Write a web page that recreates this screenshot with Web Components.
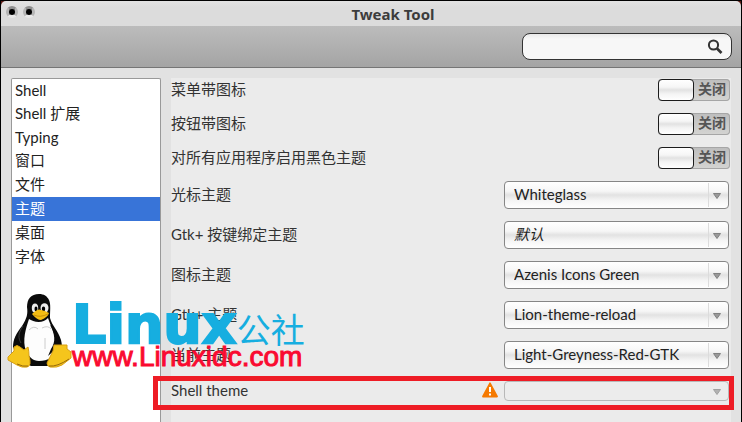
<!DOCTYPE html>
<html lang="zh-CN">
<head>
<meta charset="utf-8">
<title>Tweak Tool</title>
<style>
  html, body { height: 100%; margin: 0; }
  body {
    overflow: hidden;
    background: #000;
    color: #333;
    font: 15px/22px Lato, "Noto Sans CJK SC", sans-serif;
  }
</style>
</head>
<body>
<tweak-window heading="Tweak Tool">
  <tweak-search slot="toolbar"></tweak-search>
  <tweak-sidebar slot="sidebar">
    <tweak-category compact>Shell</tweak-category>
    <tweak-category>Shell 扩展</tweak-category>
    <tweak-category compact>Typing</tweak-category>
    <tweak-category>窗口</tweak-category>
    <tweak-category>文件</tweak-category>
    <tweak-category selected>主题</tweak-category>
    <tweak-category>桌面</tweak-category>
    <tweak-category>字体</tweak-category>
  </tweak-sidebar>
  <tweak-switch label="菜单带图标"></tweak-switch>
  <tweak-switch label="按钮带图标"></tweak-switch>
  <tweak-switch label="对所有应用程序启用黑色主题"></tweak-switch>
  <tweak-select label="光标主题" value="Whiteglass"></tweak-select>
  <tweak-select label="Gtk+ 按键绑定主题" value="默认" unset></tweak-select>
  <tweak-select label="图标主题" value="Azenis Icons Green"></tweak-select>
  <tweak-select label="Gtk+ 主题" value="Lion-theme-reload"></tweak-select>
  <tweak-select label="当前主题" value="Light-Greyness-Red-GTK"></tweak-select>
  <tweak-select label="Shell theme" value="" disabled highlighted></tweak-select>
</tweak-window>
<site-watermark></site-watermark>

<script>
class TweakWindow extends HTMLElement {
  constructor() {
    super();
    this.attachShadow({ mode: 'open' });
  }

  connectedCallback() {
    this.shadowRoot.innerHTML = `
      <style>
        :host {
          display: flex;
          flex-direction: column;
          height: 100%;
          box-sizing: border-box;
          border: 1px solid #000;
          border-bottom: 0;
          background: #5a1a14;
        }
        header {
          display: flex;
          align-items: center;
          gap: 10px;
          height: 25px;
          padding: 0 0 0 5px;
          background: linear-gradient(#e2e2e2, #dcdcdc 6px);
          border-radius: 5px 5px 0 0;
        }
        .buttons { display: flex; gap: 5px; padding-bottom: 3px; }
        .buttons button {
          width: 12px;
          height: 12px;
          padding: 0;
          border: 3px solid;
          border-color: #8e8e8e #b5b5b5 #e8e8e8;
          border-radius: 50%;
          background: #000;
        }
        h1 {
          flex: 1;
          margin: 0;
          padding-top: 1px;
          color: #3c3c3c;
          font: bold 15px/22px "Noto Sans", sans-serif;
          text-align: center;
        }
        .toolbar {
          display: flex;
          justify-content: flex-end;
          padding: 7px 9px;
          background: linear-gradient(#bcbcbc, #a4a4a4);
          border-bottom: 1px solid #757575;
        }
        .body {
          flex: 1;
          min-height: 0;
          display: flex;
          gap: 10px;
          padding: 10px 10px 0;
          background: #e2e2e2;
        }
        main {
          flex: 1;
          display: flex;
          flex-direction: column;
          gap: 12px;
          padding: 1px 1px 0 0;
          background: #ebebeb;
        }
      </style>
      <header>
        <div class="buttons">
          <button aria-label="Close"></button>
          <button aria-label="Minimize"></button>
        </div>
        <h1>${this.getAttribute('heading')}</h1>
      </header>
      <div class="toolbar"><slot name="toolbar"></slot></div>
      <div class="body">
        <slot name="sidebar"></slot>
        <main><slot></slot></main>
      </div>
    `;
  }
}

class TweakSearch extends HTMLElement {
  constructor() {
    super();
    this.attachShadow({ mode: 'open' });
    this.shadowRoot.innerHTML = `
      <style>
        :host { display: block; width: 210px; }
        label {
          display: flex;
          align-items: center;
          box-sizing: border-box;
          height: 27px;
          padding: 0 8px;
          border: 1px solid #333;
          border-radius: 8px;
          background: linear-gradient(#e9e9e9, #f7f7f7 5px);
        }
        input {
          flex: 1;
          min-width: 0;
          border: 0;
          outline: 0;
          background: none;
          font: inherit;
        }
      </style>
      <label>
        <input type="text" aria-label="Search">
        <svg width="16" height="16" viewBox="0 0 16 16" fill="none" stroke="#333">
          <circle cx="6.5" cy="6" r="4.6" stroke-width="2"></circle>
          <path d="M10 9.5L14.5 14" stroke-width="2.6"></path>
        </svg>
      </label>
    `;
  }
}

class TweakSidebar extends HTMLElement {
  constructor() {
    super();
    this.attachShadow({ mode: 'open' });
    this.shadowRoot.innerHTML = `
      <style>
        :host {
          display: block;
          box-sizing: border-box;
          width: 150px;
          background: #fff;
          border: 1px solid #999;
          border-bottom: 0;
          border-radius: 2px 2px 0 0;
        }
      </style>
      <nav><slot></slot></nav>
    `;
  }
}

class TweakCategory extends HTMLElement {
  constructor() {
    super();
    this.attachShadow({ mode: 'open' });
    this.shadowRoot.innerHTML = `
      <style>
        :host { display: block; height: 24px; color: #222; }
        :host([compact]) { height: 23px; }
        :host([selected]) { background: #3874d8; color: #fff; }
        button {
          display: block;
          width: 100%;
          height: 100%;
          padding: 0 3px 2px;
          border: 0;
          background: none;
          color: inherit;
          font: inherit;
          text-align: left;
        }
      </style>
      <button><slot></slot></button>
    `;
  }
}

class TweakSwitch extends HTMLElement {
  constructor() {
    super();
    this.attachShadow({ mode: 'open' });
  }

  connectedCallback() {
    this.shadowRoot.innerHTML = `
      <style>
        :host {
          display: flex;
          align-items: center;
          justify-content: space-between;
          height: 22px;
        }
        label { padding-bottom: 2px; }
        .track {
          display: flex;
          box-sizing: border-box;
          width: 72px;
          height: 22px;
          border-radius: 4px;
          background: linear-gradient(#bdbdbd, #d4d4d2);
          box-shadow: inset 0 0 0 1px #a6a6a6;
        }
        input {
          appearance: none;
          box-sizing: border-box;
          width: 36px;
          height: 22px;
          margin: 0;
          border: 1px solid #1c1c1c;
          border-radius: 4px;
          background: linear-gradient(#fff, #f6f6f6 35%, #e2e2e2 50%, #f4f4f4 70%, #fff);
        }
        .state {
          flex: 1;
          color: #555;
          font-size: 14px;
          font-weight: bold;
          line-height: 20px;
          text-align: center;
        }
      </style>
      <label for="toggle">${this.getAttribute('label')}</label>
      <span class="track">
        <input type="checkbox" role="switch" id="toggle">
        <span class="state">关闭</span>
      </span>
    `;
    const toggle = this.shadowRoot.getElementById('toggle');
    const state = this.shadowRoot.querySelector('.state');
    toggle.addEventListener('change', () => {
      state.textContent = toggle.checked ? '打开' : '关闭';
    });
  }
}

class TweakSelect extends HTMLElement {
  constructor() {
    super();
    this.attachShadow({ mode: 'open' });
  }

  connectedCallback() {
    const disabled = this.hasAttribute('disabled');
    const value = this.getAttribute('value');
    const warning = `
      <svg class="warning" width="16" height="16" viewBox="0 0 16 16">
        <path d="M8 1.3L15 14.5H1Z" fill="#f57900" stroke="#f57900" stroke-width="1.8" stroke-linejoin="round"></path>
        <path d="M8 5v5M8 11.6v2" stroke="#fff" stroke-width="2"></path>
      </svg>`;
    this.shadowRoot.innerHTML = `
      <style>
        :host {
          position: relative;
          display: flex;
          align-items: center;
          gap: 6px;
          height: 28px;
          margin-right: 1px;
        }
        :host([disabled]) { height: 20px; }
        label { flex: 1; padding-bottom: 2px; }
        .warning { padding-bottom: 2px; }
        .box { position: relative; width: 225px; height: 100%; }
        select {
          appearance: none;
          display: block;
          width: 100%;
          height: 100%;
          padding: 0 30px 2px 9px;
          border: 1px solid #868686;
          border-radius: 4px;
          background: linear-gradient(#fff, #f6f6f6 35%, #e2e2e2 50%, #f4f4f4 70%, #fff);
          color: #222;
          font: inherit;
        }
        :host([unset]) select { font-style: italic; }
        select:disabled {
          border-color: #b8b8b8;
          background: #ececec;
          opacity: 1;
        }
        .arrow {
          position: absolute;
          right: 0;
          top: 0;
          display: flex;
          align-items: center;
          justify-content: center;
          box-sizing: border-box;
          width: 21px;
          height: calc(100% - 4px);
          margin-top: 2px;
          padding: 2px 4px 0 0;
          border-left: 1px solid #dcdcdc;
          pointer-events: none;
        }
        :host([disabled]) .arrow { border-color: transparent; opacity: 0.7; }
        /* Frame drawn around the row, past its own edges */
        .frame {
          position: absolute;
          inset: -5px -5px -9px -18px;
          border: 5px solid #ee1c25;
          pointer-events: none;
        }
      </style>
      <label for="choice">${this.getAttribute('label')}</label>
      ${disabled ? warning : ''}
      <span class="box">
        <select id="choice" ${disabled ? 'disabled' : ''}>
          <option>${value}</option>
        </select>
        <span class="arrow">
          <svg width="8" height="6" viewBox="0 0 8 6"><path d="M0.5 0.5H7.5L4 5.5Z" fill="#999" stroke="#808080"></path></svg>
        </span>
      </span>
      ${this.hasAttribute('highlighted') ? '<span class="frame"></span>' : ''}
    `;
  }
}

class SiteWatermark extends HTMLElement {
  constructor() {
    super();
    this.attachShadow({ mode: 'open' });
    this.shadowRoot.innerHTML = `
      <style>
        :host {
          position: absolute;
          left: 7px;
          top: 293px;
          display: flex;
          pointer-events: none;
        }
        .name {
          display: flex;
          align-items: baseline;
          height: 49px;
          color: #16aee0;
          font: 34px/40px "Noto Sans CJK SC", sans-serif;
        }
        b {
          font: bold 54px/64px "DejaVu Sans", sans-serif;
          -webkit-text-stroke: 2px #16aee0;
        }
        .url {
          color: #fa0a30;
          font: 28px/30px "Liberation Sans", sans-serif;
          -webkit-text-stroke: 1px #fa0a30;
        }
      </style>
      <svg width="65" height="76" viewBox="0 0 65 76">
        <path d="M32 1C24 1 20 6 20 14C21 21 20 25 15 33C9 41 6 46 6 54L12 66L24 73L44 73L50 69C55 62 56 55 54 47C51 37 45 33 43 25C43 18 44 11 42 7C40 3 37 1 32 1Z" fill="#0b0b0b"></path>
        <path d="M22 26C26 29 36 31 41 25C44 35 50 41 48 54C48 64 41 68 32 68C26 68 22 64 19 58C15 47 19 35 22 26Z" fill="#fdfdfd"></path>
        <path d="M22 37Q27 32 31 36M35 35Q41 32 44 36M38 45V56" fill="none" stroke="#ccc"></path>
        <path d="M16 33C11 40 11 45 14 50" fill="none" stroke="#3c3c3c"></path>
        <path d="M46 34C51 40 54 48 50 55L41 63L44 56C49 49 48 41 43 32Z" fill="#0b0b0b"></path>
        <ellipse cx="28" cy="15" rx="3.2" ry="4.5" fill="#eee"></ellipse>
        <ellipse cx="37.5" cy="15" rx="4" ry="4.8" fill="#eee"></ellipse>
        <ellipse cx="29" cy="16" rx="1.5" ry="2.4"></ellipse>
        <ellipse cx="36.5" cy="16" rx="1.7" ry="2.4"></ellipse>
        <path d="M25 21Q31 15 34 17Q39 18 42 20Q41 24 34 27Q30 27 25 21Z" fill="#f3bc13"></path>
        <path d="M27 22Q33 25 41 21" fill="none" stroke="#c98f08"></path>
        <path d="M1 64L7 58V54Q10 51 13 54L17 57L21 54Q22 58 22 63Q25 73 20 74Q15 75 10 72L1 67Z" fill="#f5c51c" stroke="#d9a013"></path>
        <path d="M40 70L46 58L47 52H60V56L64 59V65L55 72Q50 75 43 74Q40 73 40 70Z" fill="#f5c51c" stroke="#d9a013" stroke-linejoin="round"></path>
        <path d="M10 71Q16 74 21 73M42 73Q50 74 62 66" fill="none" stroke="#96690a"></path>
      </svg>
      <div>
        <div class="name"><b>Linux</b><span>公社</span></div>
        <div class="url">www.Linuxidc.com</div>
      </div>
    `;
  }
}

customElements.define('tweak-window', TweakWindow);
customElements.define('tweak-search', TweakSearch);
customElements.define('tweak-sidebar', TweakSidebar);
customElements.define('tweak-category', TweakCategory);
customElements.define('tweak-switch', TweakSwitch);
customElements.define('tweak-select', TweakSelect);
customElements.define('site-watermark', SiteWatermark);
</script>
</body>
</html>
